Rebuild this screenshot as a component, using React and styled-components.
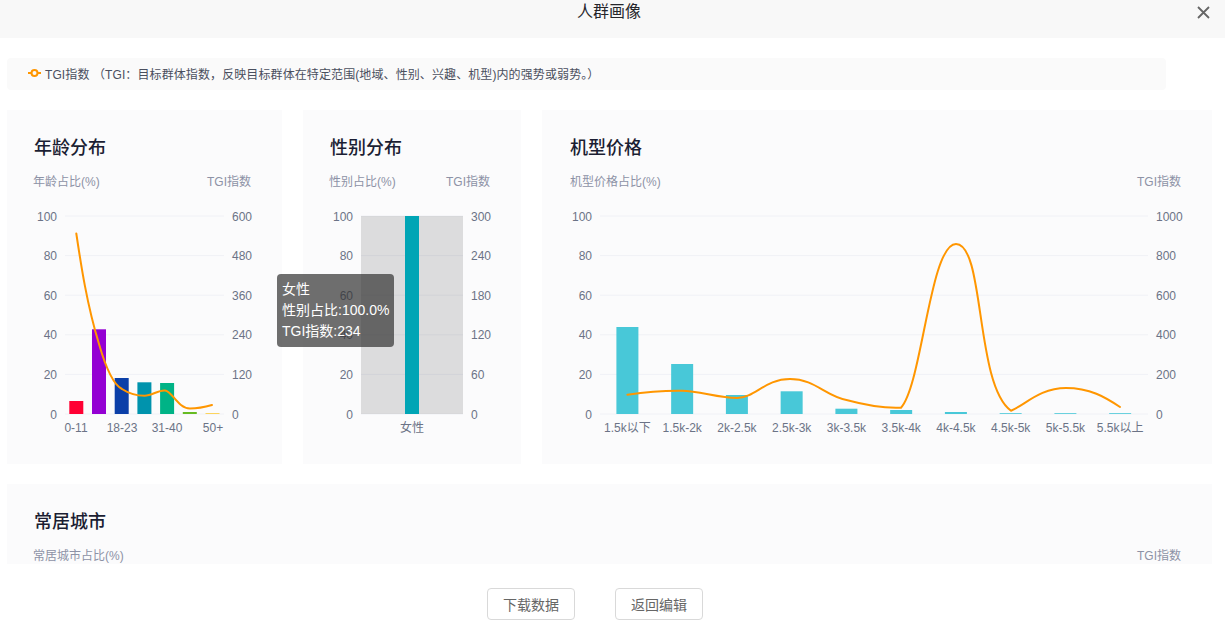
import React from 'react';
import styled, { createGlobalStyle } from 'styled-components';

const GlobalStyle = createGlobalStyle`
  html, body {
    margin: 0;
    padding: 0;
    background: #fff;
    overflow: hidden;
    font-family: "Liberation Sans", "Noto Sans CJK SC", sans-serif;
  }
  * {
    box-sizing: border-box;
  }
`;

const Page = styled.div`
  width: 1225px;
  height: 628px;
  display: flex;
  flex-direction: column;
`;

const Header = styled.header`
  position: relative;
  height: 38px;
  flex: none;
  background: #f8f8f8;
  display: flex;
  justify-content: center;
  padding-right: 7px;
`;

const HeaderTitle = styled.h1`
  margin: 0;
  font-size: 16px;
  line-height: 24px;
  font-weight: 400;
  color: #26262b;
`;

const CloseButton = styled.button`
  position: absolute;
  top: 6px;
  right: 15px;
  width: 13px;
  height: 13px;
  padding: 0;
  border: 0;
  background: none;
  display: flex;
`;

const Body = styled.main`
  height: 526px;
  flex: none;
  overflow: hidden;
  padding: 20px 13px 0 7px;
`;

const Legend = styled.div`
  width: 1159px;
  height: 32px;
  margin-bottom: 20px;
  padding: 0 0 2px 21px;
  display: flex;
  align-items: center;
  gap: 4px;
  background: #fafafa;
  border-radius: 4px;
  font-size: 12px;
  letter-spacing: 0.1px;
  color: #4a4f5e;
`;

const Cards = styled.div`
  display: grid;
  grid-template-columns: 275px 218px 670px;
  column-gap: 21px;
  row-gap: 20px;
`;

const Card = styled.section`
  position: relative;
  height: 354px;
  grid-column: ${(p) => (p.$wide ? '1 / -1' : 'auto')};
  background: #fbfbfc;
  padding-top: 25px;
`;

const CardTitle = styled.h2`
  margin: 0 0 0 ${(p) => p.$inset}px;
  font-size: 18px;
  line-height: 26px;
  font-weight: 500;
  color: #1b1e33;
`;

const AxisNames = styled.div`
  margin-top: 12px;
  padding: 0 31px 0 ${(p) => p.$inset}px;
  display: flex;
  justify-content: space-between;
  font-size: 12px;
  line-height: 18px;
  color: #8d92a6;
`;

const ChartSvg = styled.svg`
  display: block;
  margin-top: 9px;
`;

const Tooltip = styled.div`
  position: absolute;
  left: -26px;
  top: 164px;
  padding: 5px;
  border-radius: 4px;
  background: rgba(50, 50, 50, 0.7);
  color: #fff;
  font-size: 14px;
  line-height: 21px;
  white-space: nowrap;
`;

const Footer = styled.footer`
  flex: 1;
  padding: 24px 35px 0 0;
  display: flex;
  justify-content: center;
  align-items: flex-start;
  gap: 40px;
`;

const Button = styled.button`
  width: 88px;
  height: 32px;
  padding: 0;
  border: 1px solid #d9d9d9;
  border-radius: 4px;
  background: #fff;
  font-family: inherit;
  font-size: 14px;
  color: #666;
`;

const tickColor = '#6b7386';
const gridYs = [414, 374.4, 334.8, 295.2, 255.6, 216];

// axis, grid and labels shared by the three charts, coordinates are page based
const Chart = ({ left, right, box, leftTicks, rightTicks, labels, shadow, bars, barWidth, line }) => (
  <ChartSvg width={box[1]} height="240" viewBox={`${box[0]} 200 ${box[1]} 240`} fontSize="12" fill={tickColor}>
    {gridYs.map((y) => (
      <line key={y} x1={left} x2={right} y1={y} y2={y} stroke="#f0f1f6" />
    ))}
    {shadow && <rect x={left} y="216" width={right - left} height="198" fill="#000" fillOpacity="0.12" />}
    {gridYs.map((y, i) => (
      <React.Fragment key={y}>
        <text x={left - 8} y={y + 4.5} textAnchor="end">{leftTicks[i]}</text>
        <text x={right + 8} y={y + 4.5}>{rightTicks[i]}</text>
      </React.Fragment>
    ))}
    {labels.map(([x, text]) => (
      <text key={text} x={x} y="432" textAnchor="middle">{text}</text>
    ))}
    {bars.map(([x, top, color]) => (
      <rect key={x} x={x - barWidth / 2} y={top} width={barWidth} height={414 - top} fill={color} />
    ))}
    {line && <path d={line} fill="none" stroke="#ff9600" strokeWidth="2" strokeLinejoin="round" strokeLinecap="round" />}
  </ChartSvg>
);

const ageCenters = [76.3, 99, 121.7, 144.4, 167.1, 189.8, 212.5];
const ageTops = [401, 329.3, 378, 382.3, 383, 412, 413.3];
const ageColors = ['#ff0033', '#9400d3', '#0b3fa8', '#0093ad', '#00b386', '#66bb22', '#ffc61a'];
const ageBars = ageCenters.map((x, i) => [x, ageTops[i], ageColors[i]]);
const ageLine =
  'M76.3 233.5 C81 265 87 305 99 344 C105 365 112 384 122 389 C128 393 137 395.7 144.6 395.7 ' +
  'C152 395.7 158 390 165 390.5 C172 391 178 408.5 190 408.5 C197 408.5 205 407 212 405';

const priceLabels = ['1.5k以下', '1.5k-2k', '2k-2.5k', '2.5k-3k', '3k-3.5k', '3.5k-4k', '4k-4.5k', '4.5k-5k', '5k-5.5k', '5.5k以上'];
const priceTops = [327, 364, 395, 391.3, 408.7, 410, 412, 413.2, 413.2, 413.2];
const priceCenter = (i) => 627.4 + i * 54.75;
const priceBars = priceTops.map((top, i) => [priceCenter(i), top, '#48c8d8']);
const priceLine =
  'M627.4 394.7 C645 392 665 390.5 682 390.7 C700 391 718 398 737 398 C755 398 765 379 790 379 ' +
  'C815 379 825 396 846.5 400 C865 405 885 408.5 901 407.7 C922 385 930 244 956 244 ' +
  'C985 244 975 385 1011 410.7 C1025 405 1040 388 1066 388 C1090 388 1105 397 1120 407';

const percent = ['0', '20', '40', '60', '80', '100'];

export default function App() {
  return (
    <Page>
      <GlobalStyle />
      <Header>
        <HeaderTitle>人群画像</HeaderTitle>
        <CloseButton aria-label="关闭">
          <svg width="13" height="13" viewBox="0 0 13 13">
            <path d="M1 1 L12 12 M12 1 L1 12" stroke="#666" strokeWidth="1.8" />
          </svg>
        </CloseButton>
      </Header>
      <Body>
        <Legend>
          <svg width="13" height="10" viewBox="0 0 13 10">
            <path d="M0 5 H13" stroke="#ff9600" strokeWidth="2" />
            <circle cx="6.5" cy="5" r="3" fill="#fafafa" stroke="#ff9600" strokeWidth="2" />
          </svg>
          TGI指数 （TGI：目标群体指数，反映目标群体在特定范围(地域、性别、兴趣、机型)内的强势或弱势。）
        </Legend>
        <Cards>
          <Card>
            <CardTitle $inset={27}>年龄分布</CardTitle>
            <AxisNames $inset={26}>
              <span>年龄占比(%)</span>
              <span>TGI指数</span>
            </AxisNames>
            <Chart
              box={[7, 275]}
              left={65}
              right={224}
              leftTicks={percent}
              rightTicks={['0', '120', '240', '360', '480', '600']}
              labels={[[76, '0-11'], [122, '18-23'], [167, '31-40'], [213, '50+']]}
              bars={ageBars}
              barWidth={14}
              line={ageLine}
            />
          </Card>
          <Card>
            <CardTitle $inset={27}>性别分布</CardTitle>
            <AxisNames $inset={26}>
              <span>性别占比(%)</span>
              <span>TGI指数</span>
            </AxisNames>
            <Chart
              box={[303, 218]}
              left={361}
              right={463}
              leftTicks={percent}
              rightTicks={['0', '60', '120', '180', '240', '300']}
              labels={[[412, '女性']]}
              shadow
              bars={[[412, 216, '#00a5b5']]}
              barWidth={14}
            />
            <Tooltip>
              女性
              <br />
              性别占比:100.0%
              <br />
              TGI指数:234
            </Tooltip>
          </Card>
          <Card>
            <CardTitle $inset={28}>机型价格</CardTitle>
            <AxisNames $inset={28}>
              <span>机型价格占比(%)</span>
              <span>TGI指数</span>
            </AxisNames>
            <Chart
              box={[542, 670]}
              left={600}
              right={1148}
              leftTicks={percent}
              rightTicks={['0', '200', '400', '600', '800', '1000']}
              labels={priceLabels.map((text, i) => [priceCenter(i), text])}
              bars={priceBars}
              barWidth={22}
              line={priceLine}
            />
          </Card>
          <Card $wide>
            <CardTitle $inset={27}>常居城市</CardTitle>
            <AxisNames $inset={26}>
              <span>常居城市占比(%)</span>
              <span>TGI指数</span>
            </AxisNames>
          </Card>
        </Cards>
      </Body>
      <Footer>
        <Button>下载数据</Button>
        <Button>返回编辑</Button>
      </Footer>
    </Page>
  );
}
